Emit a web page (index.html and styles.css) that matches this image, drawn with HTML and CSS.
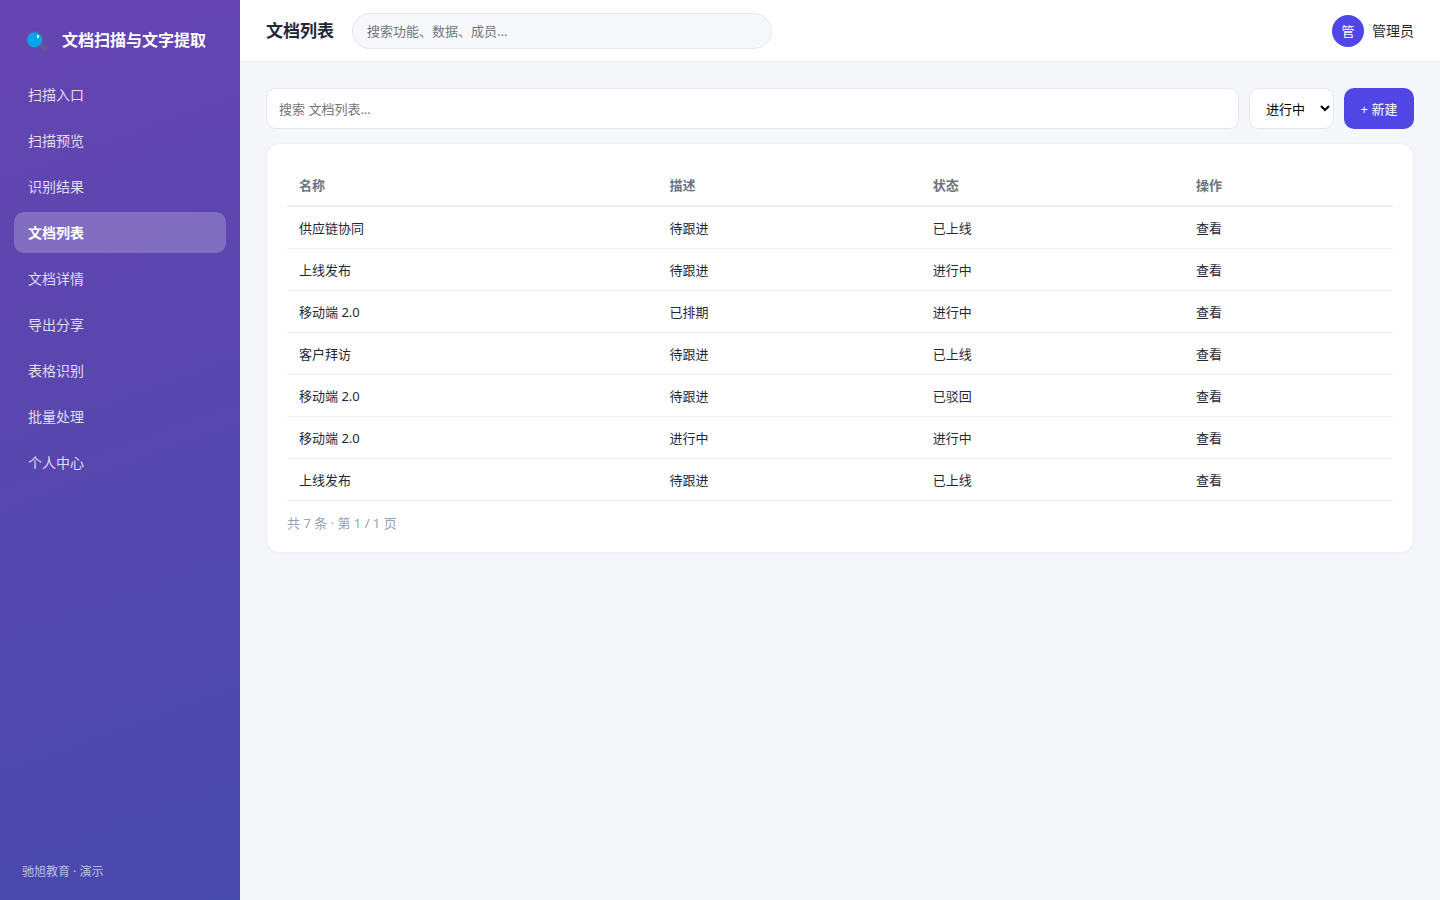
FILE: index.html
```html
<!DOCTYPE html>
<html lang="zh-CN">
<head>
    <meta charset="UTF-8">
    <meta name="viewport" content="width=device-width, initial-scale=1.0">
    <title>文档列表</title>
    <link rel="stylesheet" href="styles.css">
</head>
<body>
    <div class="app">
        <aside class="sidebar">
            <div class="brand">
                <svg class="brand-icon" viewBox="0 0 24 24" aria-hidden="true">
                    <path d="M13 18l3-3 5.6 5q.8 1-.4 2.2t-2.3.6z" fill="#5f5a92"/>
                    <circle cx="8.6" cy="11.6" r="8.6" fill="#5f5a92"/>
                    <circle cx="8.6" cy="11.8" r="7.5" fill="#00a4ef"/>
                    <path d="M11 7h2v3h-2z" fill="#fff"/>
                </svg>
                <span>文档扫描与文字提取</span>
            </div>
            <nav class="nav">
                <a href="#">扫描入口</a>
                <a href="#">扫描预览</a>
                <a href="#">识别结果</a>
                <a href="#" class="active">文档列表</a>
                <a href="#">文档详情</a>
                <a href="#">导出分享</a>
                <a href="#">表格识别</a>
                <a href="#">批量处理</a>
                <a href="#">个人中心</a>
            </nav>
            <div class="sidebar-footer">驰旭教育 · 演示</div>
        </aside>
        <div class="main">
            <header class="topbar">
                <h1>文档列表</h1>
                <input type="search" class="global-search" placeholder="搜索功能、数据、成员..." aria-label="全局搜索">
                <div class="user">
                    <span class="avatar">管</span>
                    <span>管理员</span>
                </div>
            </header>
            <main class="content">
                <div class="toolbar">
                    <input type="search" class="list-search" placeholder="搜索 文档列表..." aria-label="搜索 文档列表">
                    <select class="status" aria-label="状态">
                        <option>进行中</option>
                    </select>
                    <button type="button" class="btn">+ 新建</button>
                </div>
                <section class="card">
                    <table>
                        <thead>
                            <tr><th class="col-name">名称</th><th class="col-mid">描述</th><th class="col-mid">状态</th><th>操作</th></tr>
                        </thead>
                        <tbody>
                            <tr><td>供应链协同</td><td>待跟进</td><td>已上线</td><td><a href="#">查看</a></td></tr>
                            <tr><td>上线发布</td><td>待跟进</td><td>进行中</td><td><a href="#">查看</a></td></tr>
                            <tr><td>移动端 2.0</td><td>已排期</td><td>进行中</td><td><a href="#">查看</a></td></tr>
                            <tr><td>客户拜访</td><td>待跟进</td><td>已上线</td><td><a href="#">查看</a></td></tr>
                            <tr><td>移动端 2.0</td><td>待跟进</td><td>已驳回</td><td><a href="#">查看</a></td></tr>
                            <tr><td>移动端 2.0</td><td>进行中</td><td>进行中</td><td><a href="#">查看</a></td></tr>
                            <tr><td>上线发布</td><td>待跟进</td><td>已上线</td><td><a href="#">查看</a></td></tr>
                        </tbody>
                    </table>
                    <p class="pager">共 7 条 · 第 1 / 1 页</p>
                </section>
            </main>
        </div>
    </div>
</body>
</html>
```
FILE: styles.css
```css
* {
    box-sizing: border-box;
}
body {
    margin: 0;
    font-family: "Noto Sans", "Noto Sans CJK SC", sans-serif;
    font-size: 14px;
    line-height: 20px;
    color: #1f2937;
    background: #f5f7fb;
}
input, select, button {
    font: inherit;
    font-size: 13px;
}
a {
    color: inherit;
    text-decoration: none;
}
.app {
    display: flex;
    min-height: 100vh;
}

/* sidebar */
.sidebar {
    display: flex;
    flex-direction: column;
    flex: 0 0 240px;
    padding: 20px 14px 19px;
    color: #fff;
    background: linear-gradient(160deg, #6644b1, #4849ad);
}
.brand {
    display: flex;
    align-items: center;
    gap: 12px;
    height: 40px;
    padding-left: 12px;
    margin-bottom: 14px;
    font-size: 16px;
    font-weight: 700;
    white-space: nowrap;
}
.brand-icon {
    width: 24px;
    height: 24px;
}
.nav {
    display: flex;
    flex-direction: column;
    gap: 5px;
}
.nav a {
    padding: 11px 14px 10px;
    border-radius: 10px;
    color: rgba(255, 255, 255, 0.82);
}
.nav a.active {
    color: #fff;
    font-weight: 700;
    background: rgba(255, 255, 255, 0.22);
}
.sidebar-footer {
    margin-top: auto;
    padding: 0 8px;
    font-size: 12px;
    line-height: 18px;
    color: rgba(255, 255, 255, 0.65);
}

/* top bar */
.main {
    flex: 1;
    min-width: 0;
}
.topbar {
    display: flex;
    align-items: center;
    gap: 18px;
    height: 62px;
    padding: 0 26px;
    background: #fff;
    border-bottom: 1px solid #eceef4;
}
.topbar h1 {
    margin: 0;
    font-size: 17px;
    font-weight: 700;
}
.global-search {
    width: 420px;
    height: 36px;
    padding: 0 14px;
    border: 1px solid #e3e6ee;
    border-radius: 18px;
    background: #f6f8fc;
}
.user {
    display: flex;
    align-items: center;
    gap: 8px;
    margin-left: auto;
}
.avatar {
    display: flex;
    align-items: center;
    justify-content: center;
    width: 32px;
    height: 32px;
    border-radius: 50%;
    font-size: 13px;
    color: #fff;
    background: #4f46e5;
}

/* list page */
.content {
    padding: 26px;
}
.toolbar {
    display: flex;
    gap: 10px;
    height: 41px;
    margin-bottom: 14px;
}
.list-search {
    flex: 1;
    padding: 0 12px;
    border: 1px solid #e3e6ee;
    border-radius: 10px;
    background: #fff;
}
.status {
    width: 85px;
    padding: 0 0 0 12px;
    border: 1px solid #e3e6ee;
    border-radius: 10px;
    color: #000;
    background: #fff;
}
.btn {
    width: 70px;
    padding: 0;
    border: 0;
    border-radius: 10px;
    color: #fff;
    background: #4f46e5;
    cursor: pointer;
}
::placeholder {
    color: #757575;
}
.card {
    padding: 20px 20px 19px;
    border: 1px solid #eff1f6;
    border-radius: 14px;
    background: #fff;
    box-shadow: 0 1px 4px rgba(30, 40, 90, 0.04);
}
table {
    width: 100%;
    table-layout: fixed;
    border-collapse: separate;
    border-spacing: 0;
    font-size: 13px;
}
th, td {
    padding: 11px 12px 10px;
    text-align: left;
    border-bottom: 1px solid #eeeff4;
}
th {
    color: #6b7280;
    font-weight: 600;
    border-bottom-width: 2px;
}
.col-name {
    width: 33.5%;
}
.col-mid {
    width: 23.8%;
}
.pager {
    margin: 12px 0 0;
    font-size: 13px;
    color: #94a3b8;
}
```
